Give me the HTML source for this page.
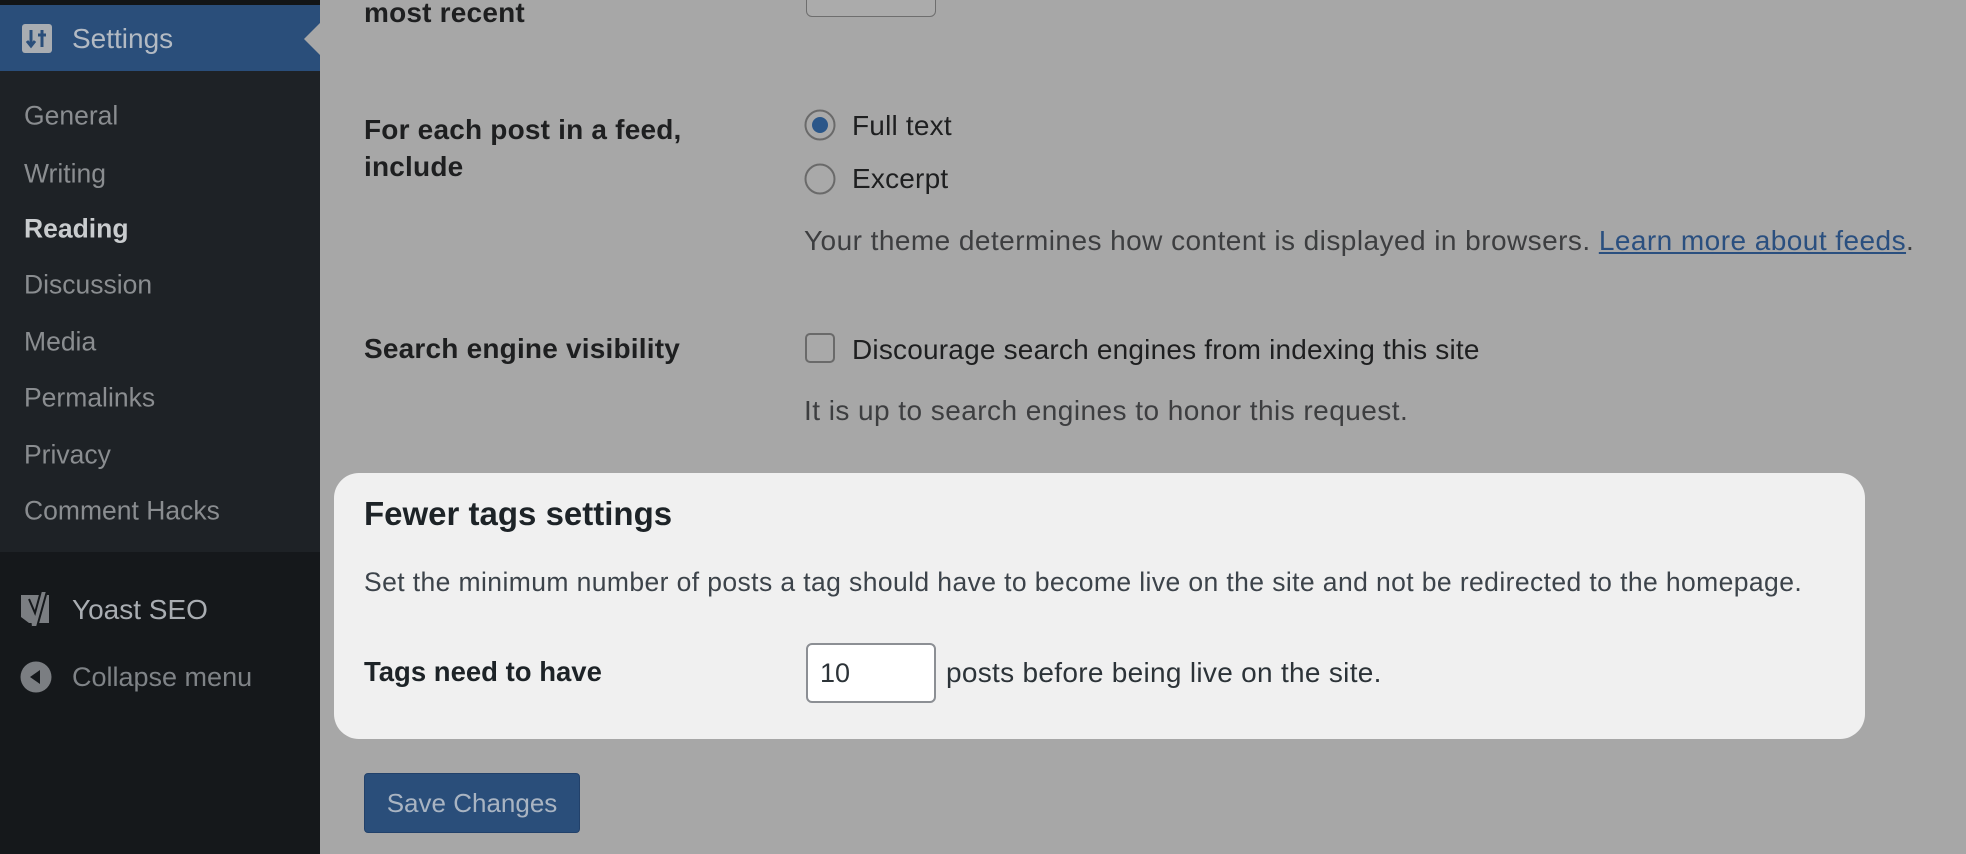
<!DOCTYPE html>
<html><head><meta charset="utf-8"><style>
*{margin:0;padding:0;box-sizing:border-box}
html,body{width:1966px;height:854px;overflow:hidden;background:#a7a7a7;font-family:"Liberation Sans",sans-serif}
.abs{position:absolute;white-space:nowrap}
#side{position:absolute;left:0;top:0;width:320px;height:854px;background:#1e2226}
#side .top{position:absolute;left:0;top:0;width:320px;height:5px;background:#121517}
#side .set{position:absolute;left:0;top:5px;width:320px;height:66px;background:#2a4e7a}
#side .low{position:absolute;left:0;top:552px;width:320px;height:302px;background:#15181b}
.sub{position:absolute;left:24px;font-size:26.5px;color:#8a8d90;transform:translateY(-50%);margin-top:2px}
.t{font-size:28px;color:#1e1f20;letter-spacing:0.2px}
.d{font-size:28px;color:#3d3e40;letter-spacing:0.45px}
b{font-weight:bold}
</style></head><body>
<div id="side">
<div class="top"></div>
<div class="set"></div>
<div class="low"></div>
<svg class="abs" style="left:22px;top:24px" width="30" height="29" viewBox="0 0 30 29"><rect width="30" height="29" rx="3" fill="#a9adb2"/><path d="M9 6v16M5 17l4 5 4-5M20 6v17M16 11h8" stroke="#2a4e7a" stroke-width="3" fill="none"/></svg>
<div class="abs" style="left:72px;top:23px;font-size:28px;color:#b3bac3">Settings</div>
<svg class="abs" style="left:302px;top:23px" width="18" height="32"><path d="M18 0L2 16L18 32Z" fill="#a7a7a7"/></svg>
<div class="sub" style="top:114px">General</div>
<div class="sub" style="top:172px">Writing</div>
<div class="sub" style="top:227px;color:#c9ccce;font-weight:bold">Reading</div>
<div class="sub" style="top:283px">Discussion</div>
<div class="sub" style="top:340px">Media</div>
<div class="sub" style="top:396px">Permalinks</div>
<div class="sub" style="top:453px">Privacy</div>
<div class="sub" style="top:509px">Comment Hacks</div>
<svg class="abs" style="left:19px;top:589px" width="36" height="40" viewBox="0 0 36 40"><path d="M2 6h28v28H10L2 28Z" fill="#7b7e82"/><path d="M10 10l6 14 6-22h6l-10 36h-5" fill="#7b7e82" stroke="#15181b" stroke-width="2"/></svg>
<div class="abs" style="left:72px;top:594px;font-size:28px;color:#a9adb2">Yoast SEO</div>
<svg class="abs" style="left:20px;top:661px" width="32" height="32"><circle cx="16" cy="16" r="15.5" fill="#7b7e82"/><path d="M20 9v14l-10-7Z" fill="#15181b"/></svg>
<div class="abs" style="left:72px;top:662px;font-size:27px;color:#7f8387">Collapse menu</div>
</div>

<div class="abs" style="left:806px;top:-6px;width:130px;height:23px;border:1.5px solid #6e6e6e;border-radius:6px;background:#ababab"></div>
<div class="abs t" style="left:364px;top:-3px"><b>most recent</b></div>

<div class="abs t" style="left:364px;top:111px;line-height:37px"><b>For each post in a feed,<br>include</b></div>
<svg class="abs" style="left:804px;top:109px" width="32" height="32"><circle cx="16" cy="16" r="14.5" fill="#a9a9a9" stroke="#6a6a6a" stroke-width="2"/><circle cx="16" cy="16" r="8" fill="#2a5689"/></svg>
<div class="abs t" style="left:852px;top:110px">Full text</div>
<svg class="abs" style="left:804px;top:163px" width="32" height="32"><circle cx="16" cy="16" r="14.5" fill="#a9a9a9" stroke="#6a6a6a" stroke-width="2"/></svg>
<div class="abs t" style="left:852px;top:163px">Excerpt</div>
<div class="abs d" style="left:804px;top:225px">Your theme determines how content is displayed in browsers. <span style="color:#2a4f7f;text-decoration:underline">Learn more about feeds</span>.</div>

<div class="abs t" style="left:364px;top:333px"><b>Search engine visibility</b></div>
<div class="abs" style="left:805px;top:333px;width:30px;height:30px;border:2px solid #6a6a6a;border-radius:5px;background:#a9a9a9"></div>
<div class="abs t" style="left:852px;top:334px">Discourage search engines from indexing this site</div>
<div class="abs d" style="left:804px;top:395px">It is up to search engines to honor this request.</div>

<div class="abs" style="left:334px;top:473px;width:1531px;height:266px;background:#f0f0f0;border-radius:25px"></div>
<div class="abs" style="left:364px;top:495px;font-size:33px;font-weight:bold;color:#1d2327">Fewer tags settings</div>
<div class="abs" style="left:364px;top:567px;font-size:26.5px;color:#3c434a;letter-spacing:0.4px">Set the minimum number of posts a tag should have to become live on the site and not be redirected to the homepage.</div>
<div class="abs" style="left:364px;top:656px;font-size:27.5px;font-weight:bold;color:#1d2327">Tags need to have</div>
<div class="abs" style="left:806px;top:643px;width:130px;height:60px;border:2px solid #8c8f94;border-radius:6px;background:#fff;font-size:27px;color:#2c3338;padding:13px 0 0 12px">10</div>
<div class="abs" style="left:946px;top:657px;font-size:28px;color:#2c3338;letter-spacing:0.3px">posts before being live on the site.</div>

<div class="abs" style="left:364px;top:773px;width:216px;height:60px;background:#2a4e7a;border-radius:4px;border:1px solid #22416a;color:#a9b4c2;font-size:26px;text-align:center;line-height:58px">Save Changes</div>
</body></html>
